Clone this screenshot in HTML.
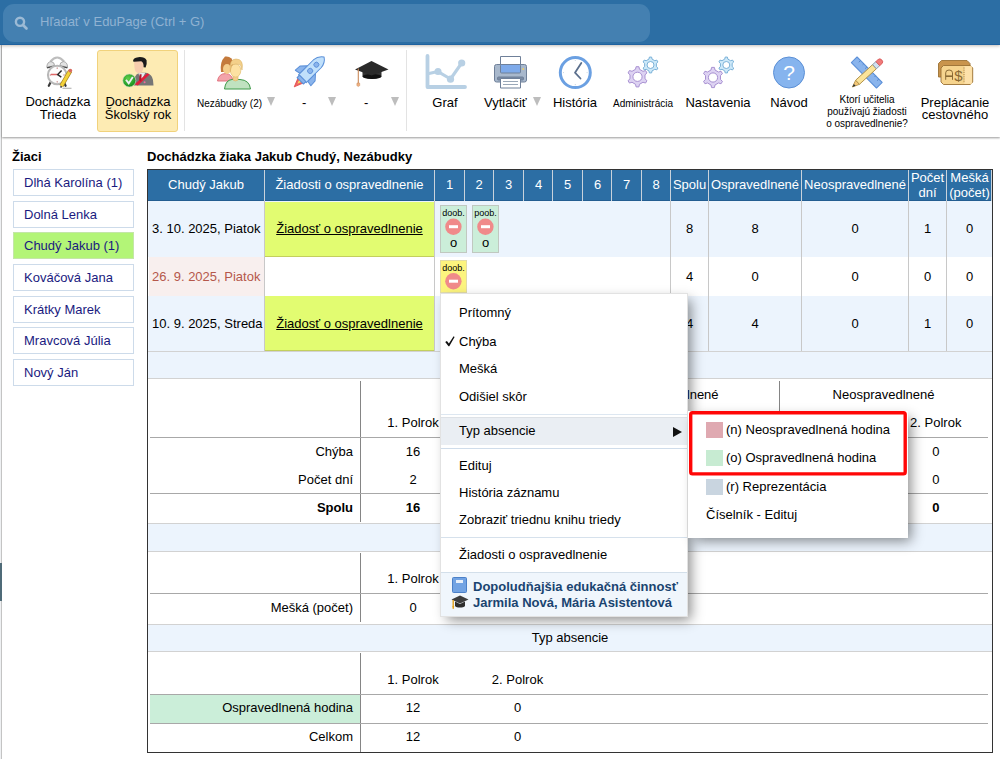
<!DOCTYPE html>
<html><head><meta charset="utf-8">
<style>
*{box-sizing:border-box}
html,body{margin:0;padding:0;width:1000px;height:759px;overflow:hidden;background:#fff;font-family:"Liberation Sans",sans-serif;color:#000}
.a{position:absolute}
.t{position:absolute;white-space:nowrap;font-size:13px;line-height:15px}
.c{text-align:center}
.r{text-align:right}
#top{left:0;top:0;width:1000px;height:45px;background:#2c6ea4;border-bottom:1px solid #1f62a0;box-shadow:0 1px 3px rgba(60,40,20,.3);z-index:2}
#search{left:3px;top:4px;width:647px;height:38px;border-radius:11px;background:#4480b1}
#tb{left:2px;top:45px;width:998px;height:92px;background:#fff;box-shadow:0 1px 2px rgba(0,0,0,.4)}
.sep{position:absolute;width:1px;background:#e3e3e3}
.tri{position:absolute;width:0;height:0;border-left:4.5px solid transparent;border-right:4.5px solid transparent;border-top:9px solid #bdbdbd}
.stu{position:absolute;left:13px;width:121px;height:27px;border:1px solid #cddbea;background:#fff;color:#1a1a80;font-size:13px;line-height:25px;padding-left:10px;white-space:nowrap}
.hd{position:absolute;top:170px;height:31px;background:#2c6ea4;color:#fff;border-right:1px solid #d8e2ec;font-size:13px;text-align:center;line-height:31px;white-space:nowrap}
.vl{position:absolute;width:1px;background:#c8c8c8}
.hl{position:absolute;height:1px;background:#c8c8c8}
</style></head><body>
<!-- left strip -->
<div class="a" style="left:0;top:45px;width:1px;height:714px;background:#eef0f2"></div>
<div class="a" style="left:1px;top:45px;width:1px;height:714px;background:#c4c4c4"></div>
<div class="a" style="left:0;top:563px;width:2px;height:38px;background:#4f6b78"></div>

<!-- top bar -->
<div id="top" class="a"></div>
<div id="search" class="a" style="z-index:3"></div>
<div class="t" style="left:40px;top:14px;font-size:13px;line-height:15px;color:#90b2d2;z-index:4">Hľadať v EduPage (Ctrl + G)</div>

<!-- toolbar -->
<div id="tb" class="a"></div>
<div class="a" style="left:97px;top:50px;width:81px;height:82px;background:#fdebb3;border:1px solid #f1d27c;border-radius:3px"></div>
<div class="sep" style="left:184px;top:50px;height:81px"></div>
<div class="sep" style="left:406px;top:50px;height:81px"></div>

<div class="t c" style="left:18px;width:80px;top:95px;line-height:13px">Dochádzka<br>Trieda</div>
<div class="t c" style="left:98px;width:80px;top:95px;line-height:13px">Dochádzka<br>Školský rok</div>
<div class="t" style="left:197px;top:98px;font-size:10px;line-height:12px">Nezábudky (2)</div>
<div class="tri" style="left:267px;top:97px"></div>
<div class="t" style="left:302px;top:95px">-</div>
<div class="tri" style="left:328px;top:97px"></div>
<div class="t" style="left:364px;top:95px">-</div>
<div class="tri" style="left:391px;top:97px"></div>
<div class="t c" style="left:415px;width:60px;top:95px">Graf</div>
<div class="t" style="left:484px;top:95px">Vytlačiť</div>
<div class="tri" style="left:533px;top:97px"></div>
<div class="t c" style="left:545px;width:60px;top:95px">História</div>
<div class="t c" style="left:603px;width:80px;top:98px;font-size:10px;line-height:12px">Administrácia</div>
<div class="t c" style="left:678px;width:80px;top:95px">Nastavenia</div>
<div class="t c" style="left:759px;width:60px;top:95px">Návod</div>
<div class="t c" style="left:817px;width:100px;top:93.5px;font-size:10px;line-height:12px">Ktorí učitelia<br>používajú žiadosti<br>o ospravedlnenie?</div>
<div class="t c" style="left:910px;width:90px;top:96.5px;line-height:12px">Preplácanie<br>cestovného</div>

<svg class="a" style="left:0;top:0;z-index:4" width="1000" height="140" viewBox="0 0 1000 140"><circle cx="20" cy="21.8" r="4.1" fill="none" stroke="#9cbad5" stroke-width="2.4"/><path d="M23 25L26.5 28.5" stroke="#9cbad5" stroke-width="2.6" stroke-linecap="round"/>
<g>
<path d="M50.5 61.5 Q57.2 53.5 64 61.5" fill="none" stroke="#bdbdbd" stroke-width="2.2"/>
<path d="M46.8 67.3 Q47 61.8 51 61.6 Q54.5 62 54.6 65.5 Z" fill="#e2e2e2" stroke="#9a9a9a" stroke-width="0.8"/>
<path d="M46.8 67.3 L54.6 65.5 L54.2 66.8 L47.2 68.4Z" fill="#4a4a4a"/>
<path d="M67.6 67.3 Q67.4 61.8 63.4 61.6 Q59.9 62 59.8 65.5 Z" fill="#e2e2e2" stroke="#9a9a9a" stroke-width="0.8"/>
<path d="M67.6 67.3 L59.8 65.5 L60.2 66.8 L67.2 68.4Z" fill="#4a4a4a"/>
<path d="M50.5 82.5 L48.8 85.8" stroke="#3a3a3a" stroke-width="2.2" stroke-linecap="round"/>
<path d="M64 82.5 L65.6 85.8" stroke="#3a3a3a" stroke-width="2.2" stroke-linecap="round"/>
<circle cx="57.2" cy="75" r="9.3" fill="#fdfdfd" stroke="#b8b8b8" stroke-width="2"/>
<path d="M57.2 67.5 V68.8 M57.2 81.2 V82.5 M64.7 75 H63.4 M49.7 75 H51" stroke="#b06060" stroke-width="0.9"/>
<path d="M50.8 74.4 L57.6 74.6" stroke="#e06868" stroke-width="1.5"/>
<path d="M61.6 70.5 L57.7 74.6 L61.3 77.1" fill="none" stroke="#2a2a2a" stroke-width="1.5"/>
<path d="M70.2 70.8 L61.4 86" stroke="#a88420" stroke-width="4.4"/>
<path d="M70.2 70.8 L61.4 86" stroke="#f3d23a" stroke-width="3"/>
<circle cx="70.3" cy="70.6" r="1.9" fill="#d86a60"/>
<path d="M61.4 86 L60.7 87.6" stroke="#444" stroke-width="1.6"/>
<path d="M62.5 88.3 L71.5 88.3" stroke="#b8b8b8" stroke-width="1.2"/>
</g>
<g>
<defs><radialGradient id="gck" cx="0.4" cy="0.35" r="0.7"><stop offset="0" stop-color="#5fd04a"/><stop offset="1" stop-color="#0f8a1a"/></radialGradient></defs>
<path d="M134 85.5 L134.5 78.5 Q135.5 73.5 141 72.8 L146 72.8 Q152 74 153 80 L153.5 85.5Z" fill="#767676"/>
<path d="M138.3 73.3 L145.3 72.8 L141.5 80Z" fill="#e6ecef"/>
<path d="M134.5 84.2 L147.3 73.2 L149.6 74.6 L137.8 85.5Z" fill="#e21e3c"/>
<path d="M139.6 74.2 L141.6 74.2 L141.2 82 L139.2 80.3Z" fill="#b3172a"/>
<circle cx="144.6" cy="82.3" r="1" fill="#f06a9a"/>
<path d="M134.2 60.5 L143.6 60.5 Q144.2 69 141.6 72.4 Q138.2 74.2 135.6 71.6 Q134 68.5 134.2 60.5Z" fill="#f7cdae"/>
<path d="M133 61.3 Q133 57.6 138.2 57.2 Q144.5 56.6 146.6 60.3 Q147.2 64.2 145.6 67.6 L143.6 67.2 Q143.8 62.3 141.2 61.3 L134 61.8Z" fill="#1b1b1b"/>
<circle cx="129.3" cy="80.5" r="6.5" fill="url(#gck)" stroke="#cfd8c8" stroke-width="0.6"/>
<path d="M126 79.8 L128.7 83.4 L132.8 77" fill="none" stroke="#eeeef4" stroke-width="1.9"/>
</g>
<g>
<path d="M217.5 81 Q218.5 73.5 226 73.5 Q232 74 233 81Z" fill="#f3a4aa" stroke="#e06a78" stroke-width="0.9"/>
<path d="M221 72 Q219.5 62 225 56.5 Q232 55.5 233.5 63 L232 72Z" fill="#c47a3c"/>
<ellipse cx="227" cy="69" rx="4" ry="5" fill="#f4cd8c"/>
<path d="M224.5 89 Q225.5 80 232 79.5 L240 79.5 Q249.5 80 250.5 89Z" fill="#c0e2c0" stroke="#3f9a4a" stroke-width="1"/>
<path d="M233 80 L233 76 L238 76 L238 80 Q235.5 82 233 80Z" fill="#f4cd8c" stroke="#d8b060" stroke-width="0.6"/>
<ellipse cx="235.6" cy="70.5" rx="5.2" ry="6.6" fill="#fde1a2" stroke="#e2bf72" stroke-width="0.7"/>
<path d="M230.3 71 Q229 59 236 59 Q244 59 242 70 L240.5 65 Q236 63 231.5 65Z" fill="#f3d08a" stroke="#dcb468" stroke-width="0.6"/>
</g>
<g transform="translate(324.3 56.8) rotate(45)" stroke-linejoin="round">
<path d="M-3.8 33 L3.8 33 L0 42.5Z" fill="#ef6464" stroke="#e04848" stroke-width="0.8"/>
<path d="M-1.8 33 L1.8 33 L0 38Z" fill="#f8e060"/>
<path d="M-5.5 18 L-10.5 23.5 L-11 30 L-5.5 29Z" fill="#8ab4ec" stroke="#5a8fd8" stroke-width="1"/>
<path d="M5.5 18 L10.5 23.5 L11 30 L5.5 29Z" fill="#8ab4ec" stroke="#5a8fd8" stroke-width="1"/>
<path d="M-5.5 31 L-5.5 10 Q-5 3.5 0 0.3 Q5 3.5 5.5 10 L5.5 31Z" fill="#c0e0fb" stroke="#5a8fd8" stroke-width="1"/>
<rect x="-4.5" y="30.5" width="9" height="3.5" fill="#8ab4ec" stroke="#5a8fd8" stroke-width="1"/>
<circle cx="0" cy="11.2" r="2.5" fill="#8ab4ec" stroke="#5a8fd8" stroke-width="0.9"/>
<circle cx="0" cy="20" r="2.6" fill="#8ab4ec" stroke="#5a8fd8" stroke-width="0.9"/>
</g>
<g>
<path d="M362.5 68 L362.5 76.5 Q372 81.5 381.5 76.5 L381.5 68Z" fill="#333"/>
<ellipse cx="372" cy="76.5" rx="9.5" ry="2.5" fill="#111"/>
<path d="M355 69.5 L371.5 61 L388.5 69.5 L371.5 75.5Z" fill="#2a2a2a"/>
<path d="M358.3 68.5 L358.3 83" stroke="#c98a5a" stroke-width="1.1"/>
<path d="M357 83 L359.6 83 L359.8 85.5 L358.3 86.5 L356.8 85.5Z" fill="#f0b080" stroke="#c98a5a" stroke-width="0.5"/>
</g>
<g fill="none" stroke="#b8d0e4" stroke-linecap="round" stroke-linejoin="round">
<path d="M427.5 56 L427.5 87 L465 87" stroke-width="3.8"/>
<path d="M429 73.5 L438 71.6 L450.5 79 L461.7 63" stroke-width="3.1"/>
</g><g fill="#b8d0e4"><circle cx="438" cy="71.6" r="3.5"/><circle cx="450.5" cy="79.2" r="3.6"/><circle cx="461.7" cy="63" r="3.6"/></g>
<g stroke="#6f8099" stroke-width="1" stroke-linejoin="round">
<rect x="500.5" y="56.5" width="20" height="10" fill="#fff"/>
<rect x="494.5" y="64.5" width="32" height="17.5" rx="2" fill="#a8b8cc"/>
<rect x="500.5" y="64.5" width="20" height="8.5" rx="1" fill="#7eaaea"/>
<rect x="497.5" y="77" width="26" height="3" rx="1" fill="#7a8ba3"/>
<rect x="500.5" y="78.5" width="20" height="9.5" fill="#fff"/>
<path d="M503 81.5 L518 81.5 M503 84.5 L518 84.5" stroke="#9aa8b8" stroke-width="1"/>
</g><circle cx="523.2" cy="69" r="0.9" fill="#f0d060"/>
<g>
<circle cx="575.3" cy="72.6" r="15" fill="#fff" stroke="#6ba0e2" stroke-width="3"/>
<path d="M575.3 60 L575.3 61 M575.3 84 L575.3 85.2 M563 72.6 L564 72.6 M586.6 72.6 L587.6 72.6" stroke="#ccd6e0" stroke-width="1"/>
<path d="M581.3 63 L575 72.7 L580.5 78.5" fill="none" stroke="#5b6f8c" stroke-width="1.8" stroke-linecap="round" stroke-linejoin="round"/>
</g>




<path d="M636.12 66.69 L638.88 66.69 L639.51 69.31 L642.98 71.32 L645.56 70.55 L646.94 72.95 L644.99 74.79 L644.99 78.81 L646.94 80.65 L645.56 83.05 L642.98 82.28 L639.51 84.29 L638.88 86.91 L636.12 86.91 L635.49 84.29 L632.02 82.28 L629.44 83.05 L628.06 80.65 L630.01 78.81 L630.01 74.79 L628.06 72.95 L629.44 70.55 L632.02 71.32 L635.49 69.31Z M642.10 76.8 A4.6 4.6 0 1 0 632.90 76.8 A4.6 4.6 0 1 0 642.10 76.8Z" fill="#ddd2f2" fill-rule="evenodd" stroke="#a891d2" stroke-width="1" stroke-linejoin="round"/><path d="M649.41 57.07 L651.59 57.07 L652.07 59.13 L654.80 60.70 L656.82 60.10 L657.91 61.98 L656.37 63.43 L656.37 66.57 L657.91 68.02 L656.82 69.90 L654.80 69.30 L652.07 70.87 L651.59 72.93 L649.41 72.93 L648.93 70.87 L646.20 69.30 L644.18 69.90 L643.09 68.02 L644.63 66.57 L644.63 63.43 L643.09 61.98 L644.18 60.10 L646.20 60.70 L648.93 59.13Z M654.00 65 A3.5 3.5 0 1 0 647.00 65 A3.5 3.5 0 1 0 654.00 65Z" fill="#cde9f9" fill-rule="evenodd" stroke="#7ab1d8" stroke-width="1" stroke-linejoin="round"/><path d="M711.62 67.39 L714.38 67.39 L715.01 70.01 L718.48 72.02 L721.06 71.25 L722.44 73.65 L720.49 75.49 L720.49 79.51 L722.44 81.35 L721.06 83.75 L718.48 82.98 L715.01 84.99 L714.38 87.61 L711.62 87.61 L710.99 84.99 L707.52 82.98 L704.94 83.75 L703.56 81.35 L705.51 79.51 L705.51 75.49 L703.56 73.65 L704.94 71.25 L707.52 72.02 L710.99 70.01Z M717.60 77.5 A4.6 4.6 0 1 0 708.40 77.5 A4.6 4.6 0 1 0 717.60 77.5Z" fill="#ddd2f2" fill-rule="evenodd" stroke="#a891d2" stroke-width="1" stroke-linejoin="round"/><path d="M725.21 57.07 L727.39 57.07 L727.87 59.13 L730.60 60.70 L732.62 60.10 L733.71 61.98 L732.17 63.43 L732.17 66.57 L733.71 68.02 L732.62 69.90 L730.60 69.30 L727.87 70.87 L727.39 72.93 L725.21 72.93 L724.73 70.87 L722.00 69.30 L719.98 69.90 L718.89 68.02 L720.43 66.57 L720.43 63.43 L718.89 61.98 L719.98 60.10 L722.00 60.70 L724.73 59.13Z M729.80 65 A3.5 3.5 0 1 0 722.80 65 A3.5 3.5 0 1 0 729.80 65Z" fill="#cde9f9" fill-rule="evenodd" stroke="#7ab1d8" stroke-width="1" stroke-linejoin="round"/>
<circle cx="789" cy="72.5" r="15.5" fill="#86b4ee" stroke="#5c90d6" stroke-width="1"/>
<text x="789" y="80" font-family="Liberation Sans" font-size="21" fill="#fff" text-anchor="middle">?</text>
<g transform="translate(854.2 59.75) rotate(45.4)" stroke-linejoin="round">
<rect x="0" y="-4" width="35.8" height="8" fill="#8ab4ec" stroke="#5a8fd8" stroke-width="1"/>
<path d="M5 -4 V-1.5 M9.5 -4 V-2.5 M14 -4 V-1.5 M22 -4 V-1.5 M26.5 -4 V-2.5 M31 -4 V-1.5" stroke="#4f7fc4" stroke-width="0.8"/>
</g>
<g transform="translate(852.4 87) rotate(-42.6)" stroke-linejoin="round">
<path d="M0 0 L7 -2.8 L7 2.8Z" fill="#f5c878" stroke="#b09048" stroke-width="0.8"/>
<path d="M0 0 L3.2 -1.3 L3.2 1.3Z" fill="#2a3038"/>
<rect x="7" y="-2.8" width="23" height="5.6" fill="#fbe49a" stroke="#b09048" stroke-width="0.9"/>
<rect x="30" y="-2.8" width="4.5" height="5.6" fill="#cfe0f0" stroke="#8090a0" stroke-width="0.8"/>
<path d="M34.5 -2.8 L37.5 -2.8 Q40 -2.8 40 0 Q40 2.8 37.5 2.8 L34.5 2.8Z" fill="#f07a7a" stroke="#d85858" stroke-width="0.8"/>
</g>
<g stroke="#9a7034" stroke-width="0.9" stroke-linejoin="round">
<path d="M941.5 60.5 L967 60.5 L970 63.5 L970 77 L938.5 77 L938.5 63.5Z" fill="#c9944c"/>
<path d="M943.5 65.5 L970.3 65.5 L972.7 68 L972.7 82 L970.3 84.5 L943.5 84.5 L941 82 L941 68Z" fill="#f6d48e"/>
</g>
<rect x="964.3" y="66.2" width="7.6" height="17.6" fill="#fde1aa"/>
<path d="M964 67.5 V83" stroke="#9a7034" stroke-width="0.9" stroke-dasharray="1 1.2"/>
<g fill="none" stroke="#8a6a34" stroke-width="1">
<path d="M945.7 79.8 V72.8 Q945.7 70 949.1 70 Q952.5 70 952.5 72.8 V79.8"/><path d="M945.7 76.2 H952.5" stroke-width="1.6"/>
</g>
<text x="958.3" y="81" font-family="Liberation Sans" font-size="15" fill="#8a6a34" text-anchor="middle">$</text></svg>
<!-- left panel -->
<div class="t" style="left:12px;top:149px;font-weight:bold">Žiaci</div>
<div class="stu" style="top:169px">Dlhá Karolína (1)</div>
<div class="stu" style="top:201px">Dolná Lenka</div>
<div class="stu" style="top:232px;background:#b3f577;border-color:#c4e6a8">Chudý Jakub (1)</div>
<div class="stu" style="top:264px">Kováčová Jana</div>
<div class="stu" style="top:296px">Krátky Marek</div>
<div class="stu" style="top:327px">Mravcová Júlia</div>
<div class="stu" style="top:359px">Nový Ján</div>

<!-- main -->
<div class="t" style="left:147px;top:149px;font-weight:bold">Dochádzka žiaka Jakub Chudý, Nezábudky</div>
<div class="a" style="left:147px;top:169px;width:846px;height:584px;border:1px solid #333"></div>

<div class="a" style="left:148px;top:170px;width:844px;height:31px;background:#2c6ea4;border-bottom:1px solid #235d91"></div>
<div class="vl" style="left:264px;top:170px;height:31px;background:#c9d3dc"></div>
<div class="vl" style="left:434px;top:170px;height:31px;background:#c9d3dc"></div>
<div class="vl" style="left:464px;top:170px;height:31px;background:#c9d3dc"></div>
<div class="vl" style="left:493px;top:170px;height:31px;background:#c9d3dc"></div>
<div class="vl" style="left:523px;top:170px;height:31px;background:#c9d3dc"></div>
<div class="vl" style="left:552px;top:170px;height:31px;background:#c9d3dc"></div>
<div class="vl" style="left:582px;top:170px;height:31px;background:#c9d3dc"></div>
<div class="vl" style="left:611px;top:170px;height:31px;background:#c9d3dc"></div>
<div class="vl" style="left:641px;top:170px;height:31px;background:#c9d3dc"></div>
<div class="vl" style="left:670px;top:170px;height:31px;background:#c9d3dc"></div>
<div class="vl" style="left:708px;top:170px;height:31px;background:#c9d3dc"></div>
<div class="vl" style="left:801px;top:170px;height:31px;background:#c9d3dc"></div>
<div class="vl" style="left:908px;top:170px;height:31px;background:#c9d3dc"></div>
<div class="vl" style="left:946px;top:170px;height:31px;background:#c9d3dc"></div>
<div class="vl" style="left:991px;top:170px;height:31px;background:#c9d3dc"></div>
<div class="t c" style="left:148px;width:116px;top:177px;color:#fff">Chudý Jakub</div>
<div class="t c" style="left:265px;width:169px;top:177px;color:#fff">Žiadosti o ospravedlnenie</div>
<div class="t c" style="left:435px;width:29px;top:177px;color:#fff">1</div>
<div class="t c" style="left:465px;width:28px;top:177px;color:#fff">2</div>
<div class="t c" style="left:494px;width:29px;top:177px;color:#fff">3</div>
<div class="t c" style="left:524px;width:29px;top:177px;color:#fff">4</div>
<div class="t c" style="left:553px;width:29px;top:177px;color:#fff">5</div>
<div class="t c" style="left:583px;width:29px;top:177px;color:#fff">6</div>
<div class="t c" style="left:612px;width:29px;top:177px;color:#fff">7</div>
<div class="t c" style="left:642px;width:28px;top:177px;color:#fff">8</div>
<div class="t c" style="left:671px;width:37px;top:177px;color:#fff">Spolu</div>
<div class="t c" style="left:709px;width:92px;top:177px;color:#fff">Ospravedlnené</div>
<div class="t c" style="left:802px;width:106px;top:177px;color:#fff">Neospravedlnené</div>
<div class="t c" style="left:909px;width:37px;top:171px;line-height:14.5px;color:#fff">Počet<br>dní</div>
<div class="t c" style="left:947px;width:45px;top:171px;line-height:14.5px;color:#fff">Mešká<br>(počet)</div>
<div class="a" style="left:148px;top:201px;width:844px;height:56px;background:#ecf4fd"></div>
<div class="a" style="left:149px;top:257px;width:115px;height:39px;background:#f8efee"></div>
<div class="a" style="left:148px;top:296px;width:844px;height:55px;background:#ecf4fd"></div>
<div class="a" style="left:265px;top:202px;width:169px;height:55px;background:#e2fc71;border-bottom:1px solid #c3cf5e"></div>
<div class="a" style="left:265px;top:296px;width:169px;height:55px;background:#e2fc71;border-bottom:1px solid #c3cf5e"></div>
<div class="vl" style="left:264px;top:201px;height:150px"></div>
<div class="vl" style="left:434px;top:201px;height:150px"></div>
<div class="vl" style="left:670px;top:201px;height:150px"></div>
<div class="vl" style="left:708px;top:201px;height:150px"></div>
<div class="vl" style="left:801px;top:201px;height:150px"></div>
<div class="vl" style="left:908px;top:201px;height:150px"></div>
<div class="vl" style="left:946px;top:201px;height:150px"></div>
<div class="hl" style="left:148px;top:351px;width:844px"></div>
<div class="t" style="left:152px;top:220.5px;color:#000">3. 10. 2025, Piatok</div>
<div class="t c" style="left:265px;width:169px;top:220.5px;text-decoration:underline">Žiadosť o ospravedlnenie</div>
<div class="t c" style="left:671px;width:37px;top:220.5px">8</div>
<div class="t c" style="left:709px;width:92px;top:220.5px">8</div>
<div class="t c" style="left:802px;width:106px;top:220.5px">0</div>
<div class="t c" style="left:909px;width:37px;top:220.5px">1</div>
<div class="t c" style="left:947px;width:45px;top:220.5px">0</div>
<div class="t" style="left:152px;top:268.5px;color:#b5584b">26. 9. 2025, Piatok</div>
<div class="t c" style="left:671px;width:37px;top:268.5px">4</div>
<div class="t c" style="left:709px;width:92px;top:268.5px">0</div>
<div class="t c" style="left:802px;width:106px;top:268.5px">0</div>
<div class="t c" style="left:909px;width:37px;top:268.5px">0</div>
<div class="t c" style="left:947px;width:45px;top:268.5px">0</div>
<div class="t" style="left:152px;top:315.5px;color:#000">10. 9. 2025, Streda</div>
<div class="t c" style="left:265px;width:169px;top:315.5px;text-decoration:underline">Žiadosť o ospravedlnenie</div>
<div class="t c" style="left:671px;width:37px;top:315.5px">4</div>
<div class="t c" style="left:709px;width:92px;top:315.5px">4</div>
<div class="t c" style="left:802px;width:106px;top:315.5px">0</div>
<div class="t c" style="left:909px;width:37px;top:315.5px">1</div>
<div class="t c" style="left:947px;width:45px;top:315.5px">0</div>
<div class="a" style="left:440px;top:205px;width:27px;height:48px;background:#cbeed9;border:1px solid #c0c8c0"></div><div class="t c" style="left:440px;width:27px;top:208px;font-size:9px;line-height:10px">doob.</div><svg class="a" style="left:445px;top:218px" width="17" height="17" viewBox="0 0 17 17"><circle cx="8.4" cy="8.7" r="8.2" fill="#f08a8a"/><rect x="4" y="7.2" width="9" height="3" fill="#fff"/></svg><div class="t c" style="left:440px;width:27px;top:235px">o</div>
<div class="a" style="left:472px;top:205px;width:27px;height:48px;background:#cbeed9;border:1px solid #c0c8c0"></div><div class="t c" style="left:472px;width:27px;top:208px;font-size:9px;line-height:10px">poob.</div><svg class="a" style="left:477px;top:218px" width="17" height="17" viewBox="0 0 17 17"><circle cx="8.4" cy="8.7" r="8.2" fill="#f08a8a"/><rect x="4" y="7.2" width="9" height="3" fill="#fff"/></svg><div class="t c" style="left:472px;width:27px;top:235px">o</div>
<div class="a" style="left:440px;top:260px;width:27px;height:33px;background:#fcf47e;border:1px solid #e2dca6"></div><div class="t c" style="left:440px;width:27px;top:263px;font-size:9px;line-height:10px">doob.</div><svg class="a" style="left:445px;top:273px" width="17" height="17" viewBox="0 0 17 17"><circle cx="8.4" cy="8.2" r="8.2" fill="#f08a8a"/><rect x="4" y="6.7" width="9" height="3" fill="#fff"/></svg>
<div class="a" style="left:148px;top:351px;width:844px;height:28px;background:#ecf4fd;border-top:1px solid #d2d2d2;border-bottom:1px solid #d2d2d2"></div>
<div class="a" style="left:148px;top:523px;width:844px;height:29px;background:#ecf4fd;border-top:1px solid #d2d2d2;border-bottom:1px solid #d2d2d2"></div>
<div class="a" style="left:148px;top:624px;width:844px;height:28px;background:#ecf4fd;border-top:1px solid #d2d2d2;border-bottom:1px solid #d2d2d2"></div>
<div class="t c" style="left:148px;width:844px;top:629.5px">Typ absencie</div>
<div class="vl" style="left:360px;top:381px;height:141px;background:#858585"></div>
<div class="vl" style="left:779px;top:381px;height:56px;background:#858585"></div>
<div class="t c" style="left:614.5px;width:120px;top:386.5px">Ospravedlnené</div>
<div class="t c" style="left:823.5px;width:120px;top:386.5px">Neospravedlnené</div>
<div class="t c" style="left:405.5px;width:120px;top:386.5px">Spolu</div>
<div class="t c" style="left:353px;width:120px;top:414.5px">1. Polrok</div>
<div class="t c" style="left:457.5px;width:120px;top:414.5px">2. Polrok</div>
<div class="t c" style="left:562px;width:120px;top:414.5px">1. Polrok</div>
<div class="t c" style="left:667px;width:120px;top:414.5px">2. Polrok</div>
<div class="t c" style="left:771px;width:120px;top:414.5px">1. Polrok</div>
<div class="t c" style="left:875.75px;width:120px;top:414.5px">2. Polrok</div>
<div class="hl" style="left:150px;top:437px;width:838px;background:#a8a8a8"></div>
<div class="hl" style="left:150px;top:493px;width:838px;background:#a8a8a8"></div>
<div class="t r" style="left:153px;width:200px;top:443.5px">Chýba</div>
<div class="t r" style="left:153px;width:200px;top:471.5px">Počet dní</div>
<div class="t r" style="left:153px;width:200px;top:499.8px;font-weight:bold">Spolu</div>
<div class="t c" style="left:353px;width:120px;top:443.5px">16</div>
<div class="t c" style="left:457.5px;width:120px;top:443.5px">0</div>
<div class="t c" style="left:562px;width:120px;top:443.5px">16</div>
<div class="t c" style="left:667px;width:120px;top:443.5px">0</div>
<div class="t c" style="left:771px;width:120px;top:443.5px">0</div>
<div class="t c" style="left:875.75px;width:120px;top:443.5px">0</div>
<div class="t c" style="left:353px;width:120px;top:471.5px">2</div>
<div class="t c" style="left:457.5px;width:120px;top:471.5px">0</div>
<div class="t c" style="left:562px;width:120px;top:471.5px">2</div>
<div class="t c" style="left:667px;width:120px;top:471.5px">0</div>
<div class="t c" style="left:771px;width:120px;top:471.5px">0</div>
<div class="t c" style="left:875.75px;width:120px;top:471.5px">0</div>
<div class="t c" style="left:353px;width:120px;top:499.8px;font-weight:bold">16</div>
<div class="t c" style="left:457.5px;width:120px;top:499.8px;font-weight:bold">0</div>
<div class="t c" style="left:562px;width:120px;top:499.8px;font-weight:bold">16</div>
<div class="t c" style="left:667px;width:120px;top:499.8px;font-weight:bold">0</div>
<div class="t c" style="left:771px;width:120px;top:499.8px;font-weight:bold">0</div>
<div class="t c" style="left:875.75px;width:120px;top:499.8px;font-weight:bold">0</div>
<div class="vl" style="left:360px;top:553px;height:69px;background:#858585"></div>
<div class="t c" style="left:353px;width:120px;top:571px">1. Polrok</div>
<div class="t c" style="left:457.5px;width:120px;top:571px">2. Polrok</div>
<div class="hl" style="left:150px;top:593px;width:838px;background:#a8a8a8"></div>
<div class="t r" style="left:153px;width:200px;top:600.4px">Mešká (počet)</div>
<div class="t c" style="left:353px;width:120px;top:600.4px">0</div>
<div class="t c" style="left:457.5px;width:120px;top:600.4px">0</div>
<div class="vl" style="left:360px;top:653px;height:99px;background:#858585"></div>
<div class="t c" style="left:353px;width:120px;top:671.5px">1. Polrok</div>
<div class="t c" style="left:457.5px;width:120px;top:671.5px">2. Polrok</div>
<div class="hl" style="left:150px;top:694px;width:838px;background:#a8a8a8"></div>
<div class="a" style="left:150px;top:695px;width:210px;height:28px;background:#cbeed9"></div>
<div class="t r" style="left:153px;width:200px;top:700.4px">Ospravedlnená hodina</div>
<div class="t c" style="left:353px;width:120px;top:700.4px">12</div>
<div class="t c" style="left:457.5px;width:120px;top:700.4px">0</div>
<div class="hl" style="left:150px;top:723px;width:838px;background:#a8a8a8"></div>
<div class="t r" style="left:153px;width:200px;top:729.2px">Celkom</div>
<div class="t c" style="left:353px;width:120px;top:729.2px">12</div>
<div class="t c" style="left:457.5px;width:120px;top:729.2px">0</div>
<div class="a" style="left:440px;top:293px;width:248px;height:324px;background:#fff;border:1px solid #e2e2e2;box-shadow:5px 5px 12px -2px rgba(0,0,0,.45)"></div>
<div class="t" style="left:459px;top:304.5px">Prítomný</div>
<svg class="a" style="left:445px;top:336px" width="11" height="11" viewBox="0 0 11 11"><path d="M0.2 5.9 L1.9 4.9 L3.9 7.6 L8.6 0.3 L9.6 0.9 L4.3 10.2 L3.5 10.2Z" fill="#111"/></svg>
<div class="t" style="left:459px;top:334.4px">Chýba</div>
<div class="t" style="left:459px;top:361.4px">Mešká</div>
<div class="t" style="left:459px;top:388.6px">Odišiel skôr</div>
<div class="a" style="left:441px;top:414px;width:246px;height:1px;background:#dde7f1"></div>
<div class="a" style="left:441px;top:417px;width:246px;height:28px;background:#eaeef3;border-top:1px solid #dde1e6"></div>
<div class="t" style="left:459px;top:422.8px">Typ absencie</div>
<svg class="a" style="left:673px;top:427.3px" width="9" height="10" viewBox="0 0 9 10"><path d="M0 0L9 5L0 10Z" fill="#111"/></svg>
<div class="a" style="left:441px;top:448px;width:246px;height:1px;background:#cfdcea"></div>
<div class="t" style="left:459px;top:457.6px">Edituj</div>
<div class="t" style="left:459px;top:484.5px">História záznamu</div>
<div class="t" style="left:459px;top:512px">Zobraziť triednu knihu triedy</div>
<div class="a" style="left:441px;top:537px;width:246px;height:1px;background:#d6e1ec"></div>
<div class="t" style="left:459px;top:546.8px">Žiadosti o ospravedlnenie</div>
<div class="a" style="left:441px;top:572px;width:246px;height:44px;background:#f0f6fc;border-top:1px solid #d3dfea"></div>
<div class="t" style="left:473px;top:578.5px;font-weight:bold;color:#1a4470">Dopoludňajšia edukačná činnosť</div>
<div class="t" style="left:473px;top:595px;font-weight:bold;color:#1a4470">Jarmila Nová, Mária Asistentová</div>
<svg class="a" style="left:452px;top:577px" width="15" height="16" viewBox="0 0 15 16"><rect x="0.5" y="0.5" width="14" height="15" rx="1" fill="#72a3e3" stroke="#4b80c8"/><rect x="4" y="3" width="7" height="3" fill="#e8f0fa"/></svg>
<svg class="a" style="left:451px;top:595px" width="18" height="15" viewBox="0 0 18 15"><path d="M9 0.5L17.5 4.5L9 8.5L0.5 4.5Z" fill="#3d3d3d"/><path d="M4 6.5L4 11C5.5 13 12.5 13 14 11L14 6.5L9 9Z" fill="#2e2e2e"/><path d="M2.2 5L2.2 11" stroke="#e3a21a" stroke-width="1.4"/><path d="M1.2 11L3.2 11L2.7 14L1.7 14Z" fill="#e3a21a"/></svg>
<div class="a" style="left:688px;top:411px;width:220px;height:127px;background:#fff;box-shadow:5px 5px 12px -2px rgba(0,0,0,.45)"></div>
<div class="a" style="left:706px;top:422px;width:17px;height:16px;background:#dfa9b1"></div>
<div class="a" style="left:706px;top:450px;width:17px;height:16px;background:#c7ebd2"></div>
<div class="a" style="left:706px;top:479px;width:17px;height:16px;background:#c9d5e0"></div>
<div class="t" style="left:726px;top:421.6px">(n) Neospravedlnená hodina</div>
<div class="t" style="left:726px;top:450px">(o) Ospravedlnená hodina</div>
<div class="t" style="left:726px;top:478.7px">(r) Reprezentácia</div>
<div class="t" style="left:706px;top:506.79999999999995px">Číselník - Edituj</div>
<svg class="a" style="left:680px;top:400px" width="240" height="90" viewBox="680 400 240 90"><rect x="690.7" y="412.7" width="214.5" height="61.2" rx="1.8" fill="none" stroke="#ff0606" stroke-width="3.4"/></svg>
</body></html>
